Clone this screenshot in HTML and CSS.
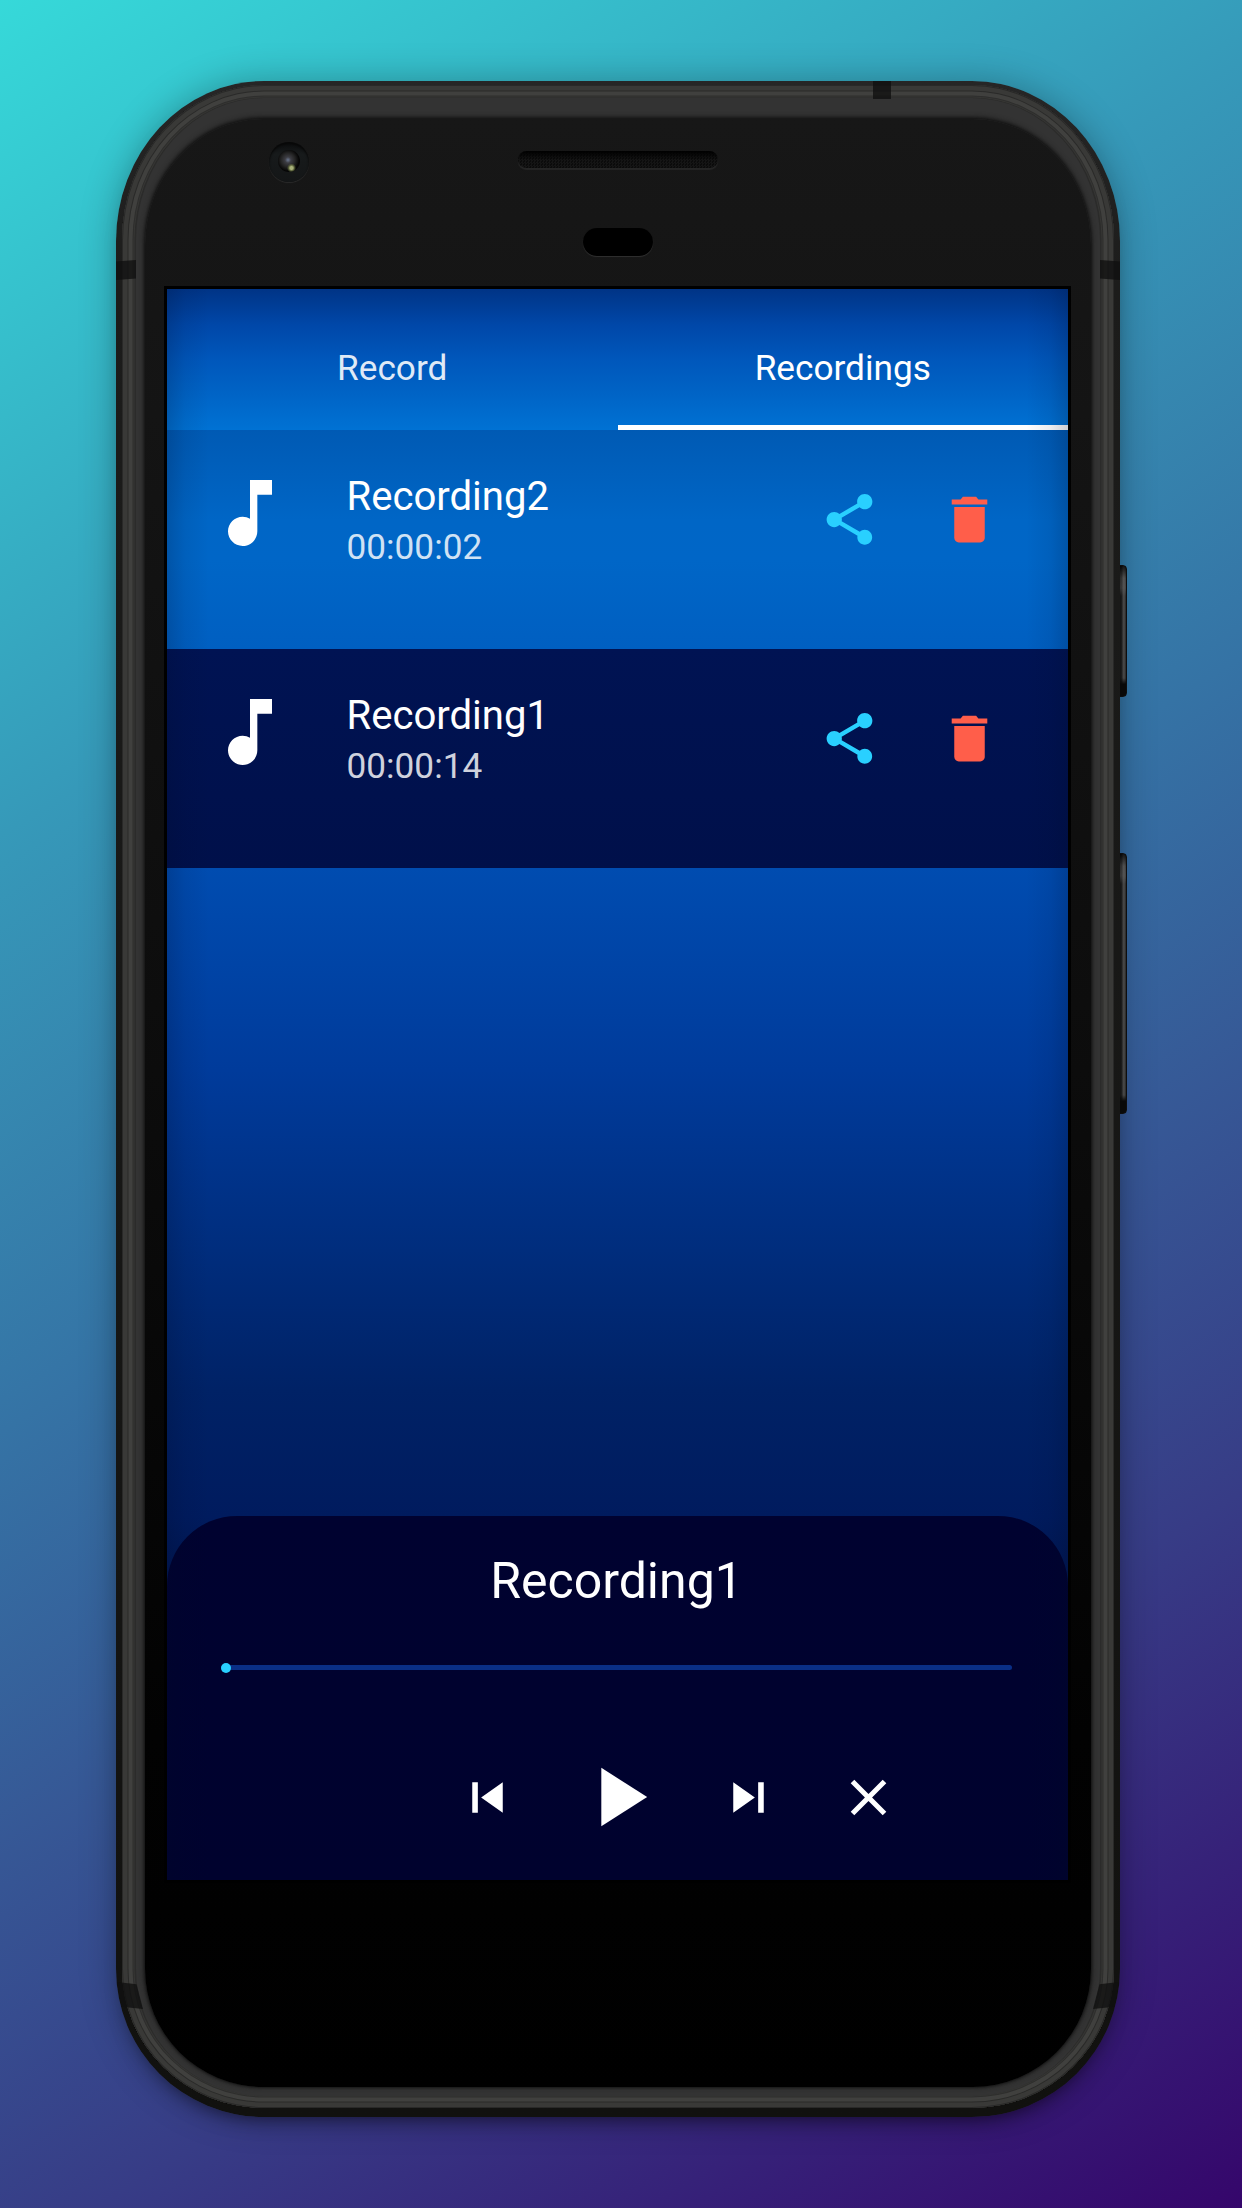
FILE: index.html
```html
<!DOCTYPE html>
<html lang="en">
<head>
<meta charset="utf-8">
<title>Recorder</title>
<link rel="stylesheet" href="styles.css">
</head>
<body>
<svg width="0" height="0" class="defs">
  <symbol id="note" viewBox="0 0 24 24"><path d="M12 3v10.55c-.59-.34-1.27-.55-2-.55-2.21 0-4 1.79-4 4s1.79 4 4 4 4-1.79 4-4V7h4V3h-6z"/></symbol>
  <symbol id="share" viewBox="0 0 24 24"><path d="M18 16.08c-.76 0-1.44.3-1.96.77L8.91 12.7c.05-.23.09-.46.09-.7s-.04-.47-.09-.7l7.05-4.11c.54.5 1.25.81 2.04.81 1.66 0 3-1.34 3-3s-1.34-3-3-3-3 1.34-3 3c0 .24.04.47.09.7L8.04 9.81C7.5 9.31 6.79 9 6 9c-1.66 0-3 1.34-3 3s1.34 3 3 3c.79 0 1.5-.31 2.04-.81l7.12 4.16c-.05.21-.08.43-.08.65 0 1.61 1.31 2.92 2.92 2.92s2.92-1.31 2.92-2.92-1.31-2.92-2.92-2.92z"/></symbol>
  <symbol id="trash" viewBox="0 0 24 24"><path d="M6 19.2c0 1 .8 1.8 1.8 1.8h8.4c1 0 1.8-.8 1.8-1.8V7.1H6v12.1zM19 4.1h-3.5L14.6 3H9.4l-.9 1.1H5v2h14v-2z"/></symbol>
</svg>
<div class="device">
  <span class="key power"></span>
  <span class="key volume"></span>
  <div class="shell">
    <div class="metal">
      <span class="band band-top"></span>
      <span class="band band-left"></span>
      <span class="band band-right"></span>
      <span class="band band-low-left"></span>
      <span class="band band-low-right"></span>
      <div class="rim">
        <div class="face">
          <span class="camera"><i class="lens"></i></span>
          <span class="speaker"></span>
          <span class="sensor"></span>
          <main class="screen">
            <nav class="tabs">
              <a class="tab">Record</a>
              <a class="tab active">Recordings</a>
            </nav>
            <section class="list">
              <article class="row">
                <svg class="note"><use href="#note"/></svg>
                <div class="info"><h2>Recording2</h2><p>00:00:02</p></div>
                <svg class="action share"><use href="#share"/></svg>
                <svg class="action trash"><use href="#trash"/></svg>
              </article>
              <article class="row selected">
                <svg class="note"><use href="#note"/></svg>
                <div class="info"><h2>Recording1</h2><p>00:00:14</p></div>
                <svg class="action share"><use href="#share"/></svg>
                <svg class="action trash"><use href="#trash"/></svg>
              </article>
            </section>
            <section class="player">
              <h1>Recording1</h1>
              <div class="track"><span class="thumb"></span></div>
              <div class="controls">
                <svg class="small" viewBox="0 0 24 24"><path d="M6 6h2.2v12H6zm3.5 6l8.5 6V6z"/></svg>
                <svg class="play" viewBox="0 0 24 24"><path d="M8 5v14l11-7z"/></svg>
                <svg class="small" viewBox="0 0 24 24"><path d="M6 18l8.5-6L6 6v12zM15.8 6v12H18V6z"/></svg>
                <svg class="small close" viewBox="0 0 24 24"><path d="M19 6.41L17.59 5 12 10.59 6.41 5 5 6.41 10.59 12 5 17.59 6.41 19 12 13.41 17.59 19 19 17.59 13.41 12z"/></svg>
              </div>
            </section>
          </main>
        </div>
      </div>
    </div>
  </div>
</div>
</body>
</html>
```

FILE: styles.css
```css
* { box-sizing: border-box; }
html, body { margin: 0; }
body {
  width: 1242px;
  height: 2208px;
  padding: 81px 122px 0 116px;
  overflow: hidden;
  background: linear-gradient(148deg, #36d9d9 0%, #3699b9 28%, #3573a5 48%, #373c86 76%, #35066b 100%);
  font-family: Roboto, sans-serif;
  color: #fff;
}
.defs { position: absolute; }
svg { display: block; flex: none; fill: currentColor; }
h1, h2, p { margin: 0; font-weight: 400; }

/* Handset body */
.device { position: relative; width: 1004px; height: 2036px; }
.shell {
  position: relative;
  height: 100%;
  padding: 4px 6px 9px;
  border-radius: 148px / 160px 160px 148px 148px;
  background: linear-gradient(#262626, #1c1c1b 10%, #11110f);
  box-shadow: 0 0 36px rgba(0, 0, 0, .28), 0 12px 20px -12px rgba(0, 0, 0, .6);
}
.metal {
  height: 100%;
  padding: 13px 14px 12px;
  border-radius: 142px / 155px 155px 139px 139px;
  background: #2b2b2a;
  box-shadow:
    inset 0 0 0 1px #292928,
    inset 0 0 0 5.5px #393937,
    inset 0 0 0 6.5px #2a2a29,
    inset 0 0 0 10.5px #40403e,
    inset 0 0 0 11.5px #2e2e2d,
    inset 0 0 0 12.5px #363634;
}
.rim {
  height: 100%;
  padding: 21px 9px 9px;
  border-radius: 128px / 142px 142px 127px 127px;
  background: #333;
}
.face {
  position: relative;
  height: 100%;
  padding: 167px 19px 0;
  border-radius: 118px / 126px 126px 118px 118px;
  background: linear-gradient(#171717, #141414 15%, #0d0d0d 45%, #020202 82%, #000);
  box-shadow: 0 0 3px #0c0c0c, 0 -1px 5px 1px #191919;
}
.band { position: absolute; background: rgba(16, 16, 16, .8); }
.band-top { left: 757px; top: 0; width: 18px; height: 18px; }
.band-left { left: 0; top: 179px; width: 20px; height: 20px; clip-path: polygon(0 8%, 100% 0, 100% 92%, 0 100%); }
.band-right { right: 0; top: 179px; width: 20px; height: 20px; clip-path: polygon(0 0, 100% 8%, 100% 100%, 0 92%); }
.band-low-left { left: 0; top: 1901px; width: 27px; height: 27px; clip-path: polygon(4% 0, 76% 8%, 100% 100%, 20% 92%); }
.band-low-right { right: 0; top: 1901px; width: 27px; height: 27px; clip-path: polygon(24% 8%, 96% 0, 80% 92%, 0 100%); }
.key {
  position: absolute;
  left: 1003px;
  width: 8px;
  border-radius: 0 4px 4px 0;
  border: 1px solid #111;
  background: linear-gradient(rgba(0, 0, 0, .7), rgba(120, 120, 120, .3) 12px, rgba(120, 120, 120, .4) 22px, transparent 30px calc(100% - 18px), #0c0c0c calc(100% - 12px)), linear-gradient(90deg, #1c1c1c 20%, #5c5c5c 65%, #2c2c2c);
}
.power { top: 484px; height: 132px; }
.volume { top: 772px; height: 261px; }

.camera {
  position: absolute;
  left: 124px;
  top: 23px;
  width: 40px;
  height: 40px;
  border-radius: 50%;
  background: linear-gradient(#0b0c0d, #171a1b 30%, #141617);
  box-shadow: inset 0 2px 2px #080808, 0 1px 1px #2b2b2b;
}
.lens {
  position: absolute;
  left: 9px;
  top: 8px;
  width: 22px;
  height: 22px;
  border-radius: 50%;
  background:
    radial-gradient(circle at 13.5px 18px, #a9b27a 0 1.5px, rgba(95, 104, 60, .8) 3px, transparent 4.5px),
    radial-gradient(circle at 10px 10px, #6c7890 0, #3c3c42 3px, #242424 7px, #050505 11px);
}
.speaker {
  position: absolute;
  left: 373px;
  top: 32px;
  width: 200px;
  height: 17px;
  border-radius: 9px;
  background:
    linear-gradient(#000, rgba(0, 0, 0, .2) 9px),
    repeating-conic-gradient(#1a1a1a 0 25%, #0e0e0e 0 50%) 0 0 / 3px 3px;
  box-shadow: 0 2px 1px #262626;
}
.sensor {
  position: absolute;
  left: 438px;
  top: 109px;
  width: 70px;
  height: 28px;
  border-radius: 14px;
  background: #000;
  box-shadow: 0 1px 1px #303030;
}

/* Application screen */
.screen {
  position: relative;
  display: flex;
  flex-direction: column;
  width: 907px;
  height: 1597px;
  border: 3px solid #000;
  background: #00194f;
}
.screen::after {
  content: "";
  position: absolute;
  inset: 0;
  pointer-events: none;
  background: linear-gradient(90deg, rgba(0, 10, 40, .2), rgba(0, 10, 40, .07) 18px, transparent 42px calc(100% - 42px), rgba(0, 10, 40, .07) calc(100% - 18px), rgba(0, 10, 40, .2));
}
.tabs {
  display: flex;
  height: 141px;
  background: linear-gradient(#003486, #0047a8 25%, #0057bb 50%, #0064c6 75%, #0072d4);
}
.tab {
  flex: 1;
  display: flex;
  align-items: center;
  justify-content: center;
  padding-top: 17px;
  border-bottom: 0 solid #fff;
  font-size: 35.2px;
  line-height: 41px;
  color: rgba(255, 255, 255, .88);
}
.active {
  padding-top: 22px;
  border-bottom-width: 5px;
  color: #fff;
}
.list {
  flex: 1;
  margin-bottom: -72px;
  background: linear-gradient(#005ab4, #0066c6 90px, #0066c7 130px, #005fc1 219px, #004cb0 438px, #003b9b 640px, #002d7d 820px, #002266 960px, #001b5e 1086px, #001650);
}
.row {
  display: flex;
  height: 219px;
  padding: 39px 68.5px 0 39px;
}
.selected { background: linear-gradient(#001353, #00104a); }
.note { width: 88px; height: 88px; }
.info { flex: 1; padding-left: 52.5px; padding-top: 4px; }
.info h2 { font-size: 40.1px; line-height: 47px; }
.info p { margin-top: 7px; font-size: 35.2px; line-height: 41px; color: rgba(255, 255, 255, .82); }
.action { width: 61px; height: 61px; margin-top: 20px; }
.share { color: #29d0ff; margin-right: 59px; }
.trash { color: #ff5e4a; }

.player {
  height: 364px;
  padding: 36px 56px 0 54px;
  border-radius: 70px 70px 0 0;
  background: linear-gradient(#000230, #00022e);
}
.player h1 { font-size: 50px; line-height: 59px; text-align: center; }
.track {
  display: flex;
  align-items: center;
  height: 5px;
  margin-top: 54px;
  border-radius: 3px;
  background: #0a2f86;
}
.thumb { width: 10px; height: 10px; flex: none; border-radius: 50%; background: #29d0ff; }
.controls { display: flex; align-items: center; gap: 50px; margin-top: 77px; padding-left: 236px; }
.small { width: 61px; height: 61px; }
.play { width: 100px; height: 100px; }
.close { margin-left: 9px; }
```
